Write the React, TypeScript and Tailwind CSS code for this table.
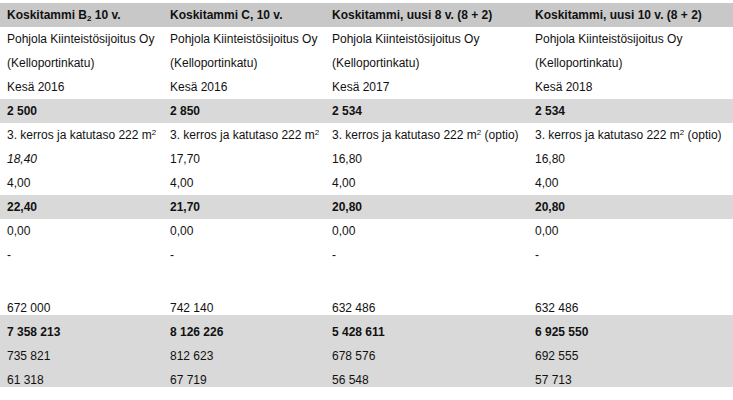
const cols = "grid grid-cols-[163px_162px_203px_205px]";

type Cell = React.ReactNode;

const Row = ({ cells, bold, gray, italicFirst, low }: { cells: Cell[]; bold?: boolean; gray?: boolean; italicFirst?: boolean; low?: boolean }) => (
  <div className={`${cols} h-6 items-center ${gray ? "bg-[#d9d9d9]" : ""} ${bold ? "font-bold" : ""}`}>
    {cells.map((c, i) => (
      <div key={i} className={`px-[7px] whitespace-nowrap leading-[14px] ${low ? "pt-[10px]" : ""} ${italicFirst && i === 0 ? "italic" : ""}`}>
        {c}
      </div>
    ))}
  </div>
);

const area = (opt: boolean) => (
  <>
    3. kerros ja katutaso 222 m<sup className="text-[8px]">2</sup>
    {opt ? " (optio)" : ""}
  </>
);

export default function App() {
  return (
    <div className="w-[733px] h-[400px] bg-white pt-[3px] text-[12px] text-[#111] overflow-hidden" style={{ fontFamily: '"Liberation Sans", Arial, sans-serif' }}>
      <div className={`${cols} h-6 items-center bg-[#c8c8c8] font-bold`}>
        <div className="px-[7px] whitespace-nowrap">
          Koskitammi B<sub className="text-[8px]">2</sub> 10 v.
        </div>
        <div className="px-[7px] whitespace-nowrap">Koskitammi C, 10 v.</div>
        <div className="px-[7px] whitespace-nowrap">Koskitammi, uusi 8 v. (8 + 2)</div>
        <div className="px-[7px] whitespace-nowrap">Koskitammi, uusi 10 v. (8 + 2)</div>
      </div>
      <Row cells={["Pohjola Kiinteistösijoitus Oy", "Pohjola Kiinteistösijoitus Oy", "Pohjola Kiinteistösijoitus Oy", "Pohjola Kiinteistösijoitus Oy"]} />
      <Row cells={["(Kelloportinkatu)", "(Kelloportinkatu)", "(Kelloportinkatu)", "(Kelloportinkatu)"]} />
      <Row cells={["Kesä 2016", "Kesä 2016", "Kesä 2017", "Kesä 2018"]} />
      <Row gray bold cells={["2 500", "2 850", "2 534", "2 534"]} />
      <Row cells={[area(false), area(false), area(true), area(true)]} />
      <Row italicFirst cells={["18,40", "17,70", "16,80", "16,80"]} />
      <Row cells={["4,00", "4,00", "4,00", "4,00"]} />
      <Row gray bold cells={["22,40", "21,70", "20,80", "20,80"]} />
      <Row cells={["0,00", "0,00", "0,00", "0,00"]} />
      <Row cells={["-", "-", "-", "-"]} />
      <Row cells={["", "", "", ""]} />
      <Row low cells={["672 000", "742 140", "632 486", "632 486"]} />
      <Row low gray bold cells={["7 358 213", "8 126 226", "5 428 611", "6 925 550"]} />
      <Row low gray cells={["735 821", "812 623", "678 576", "692 555"]} />
      <Row low gray cells={["61 318", "67 719", "56 548", "57 713"]} />
    </div>
  );
}
